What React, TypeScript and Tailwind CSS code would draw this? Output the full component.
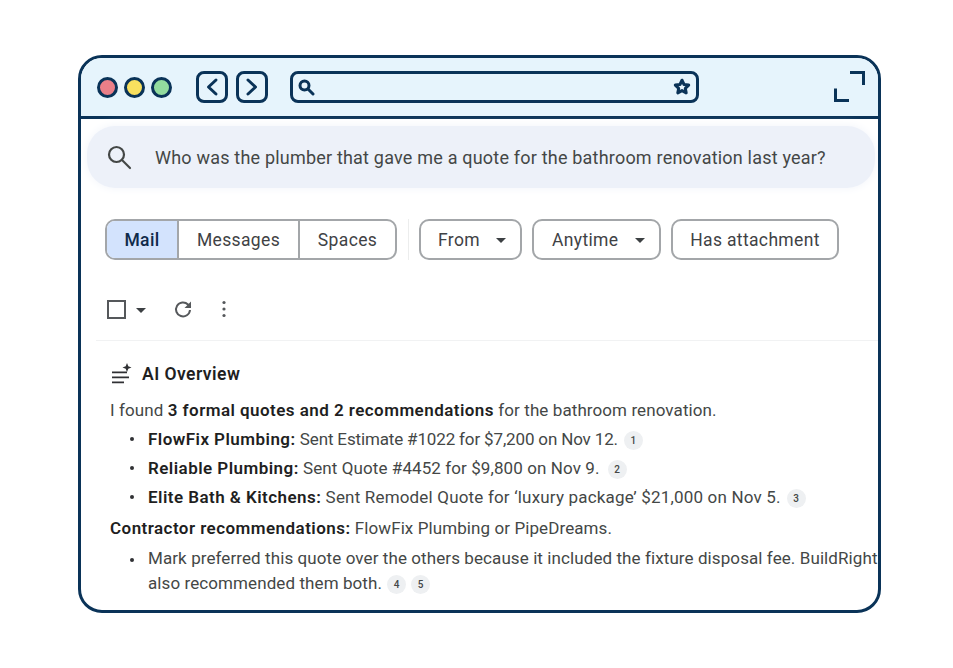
import * as React from 'react';

const NAVY = '#0a3358';

function Caret({ className = '' }: { className?: string }) {
  return (
    <svg width="10" height="5" viewBox="0 0 10 5" className={className}>
      <path d="M0 0h10L5 5z" fill="#3c4043" />
    </svg>
  );
}

function Cite({ n, className = 'ml-[8px]' }: { n: number; className?: string }) {
  return (
    <span className={`${className} inline-flex h-[19px] w-[19px] items-center justify-center rounded-full bg-[#eef0f2] align-[1px] text-[10px] font-medium tracking-normal text-[#444746]`}>
      {n}
    </span>
  );
}

function Strong({ children }: { children: React.ReactNode }) {
  return <b className="font-semibold tracking-[0.45px] text-[#1f1f1f]">{children}</b>;
}

function Bullet({ children }: { children: React.ReactNode }) {
  return (
    <div className="relative pl-[38px]">
      <span className="absolute left-[20px] top-[12px] h-[4px] w-[4px] rounded-full bg-[#303134]" />
      {children}
    </div>
  );
}

function BrowserBar() {
  return (
    <div className="flex h-[61px] shrink-0 items-center border-b-[3px] border-[#0a3358] bg-[#e6f4fc] pl-[16px] pr-[13px]">
      <div className="flex gap-[6px]">
        <span className="h-[21px] w-[21px] rounded-full border-[3px] border-[#0a3358] bg-[#ea7f88]" />
        <span className="h-[21px] w-[21px] rounded-full border-[3px] border-[#0a3358] bg-[#f8e05f]" />
        <span className="h-[21px] w-[21px] rounded-full border-[3px] border-[#0a3358] bg-[#93dc9e]" />
      </div>
      <div className="ml-[24px] flex gap-[8px]">
        <div className="flex h-[32px] w-[32px] items-center justify-center rounded-[8px] border-[3px] border-[#0a3358]">
          <svg width="14" height="20" viewBox="0 0 14 20" fill="none" stroke={NAVY} strokeWidth="3" strokeLinecap="round" strokeLinejoin="round">
            <path d="M11 3 3.5 10 11 17" />
          </svg>
        </div>
        <div className="flex h-[32px] w-[32px] items-center justify-center rounded-[8px] border-[3px] border-[#0a3358]">
          <svg width="14" height="20" viewBox="0 0 14 20" fill="none" stroke={NAVY} strokeWidth="3" strokeLinecap="round" strokeLinejoin="round">
            <path d="M3 3l7.500 7L3 17" />
          </svg>
        </div>
      </div>
      <div className="ml-[22px] flex h-[32px] w-[409px] items-center justify-between rounded-[8px] border-[3px] border-[#0a3358] pl-[4px] pr-[4px]">
        <svg width="18" height="18" viewBox="0 0 18 18" fill="none" stroke={NAVY} strokeLinecap="round">
          <circle cx="7.500" cy="7.500" r="4.500" strokeWidth="3" />
          <path d="M11.500 11.500 16 16" strokeWidth="3" />
        </svg>
        <svg width="20" height="20" viewBox="0 0 20 20" fill="none" stroke={NAVY} strokeWidth="3" strokeLinejoin="round">
          <path d="M10 3.200l2 4.300 4.700.6-3.400 3.200.9 4.600-4.200-2.300-4.200 2.300.9-4.600-3.400-3.200 4.700-.6z" />
        </svg>
      </div>
      <svg className="ml-auto" width="32" height="32" viewBox="0 0 32 32" fill="none" stroke={NAVY} strokeWidth="3">
        <path d="M17 1.500h13.500V14" />
        <path d="M2.500 17.500V29.500h13.500" />
      </svg>
    </div>
  );
}

function Filters() {
  return (
    <div className="mt-[31px] flex h-[41px] items-center pl-[24px] text-[17.500px] tracking-[0.35px] text-[#3f4245]">
      <div className="flex h-[41px] w-[292px] overflow-hidden rounded-[10px] border-2 border-[#a3a6a9]">
        <div className="flex w-[72px] items-center justify-center border-r-2 border-[#a3a6a9] bg-[#d3e3fd] pt-[1px] font-medium text-[#0f2a4a]">Mail</div>
        <div className="flex w-[121px] items-center justify-center border-r-2 border-[#a3a6a9] pt-[1px]">Messages</div>
        <div className="flex flex-1 items-center justify-center pt-[1px]">Spaces</div>
      </div>
      <div className="ml-[11px] h-[41px] w-px bg-[#eceded]" />
      <div className="ml-[10px] flex h-[41px] w-[103px] items-center justify-between rounded-[10px] border-2 border-[#a3a6a9] pl-[17px] pr-[14px] pt-[1px]">
        From <Caret />
      </div>
      <div className="ml-[10px] flex h-[41px] w-[129px] items-center justify-between rounded-[10px] border-2 border-[#a3a6a9] pl-[18px] pr-[14px] pt-[1px]">
        Anytime <Caret />
      </div>
      <div className="ml-[10px] flex h-[41px] w-[168px] items-center justify-center rounded-[10px] border-2 border-[#a3a6a9] pt-[1px]">
        Has attachment
      </div>
    </div>
  );
}

function Toolbar() {
  return (
    <div className="mt-[30px] flex h-[50px] items-start pl-[26px]">
      <span className="mt-[10px] h-[19px] w-[19px] border-2 border-[#55585b]" />
      <Caret className="ml-[10px] mt-[18px]" />
      <svg className="ml-[27px] mt-[9px]" width="20" height="20" viewBox="0 0 20 20" fill="none" stroke="#55585b" strokeWidth="2">
        <path d="M17 11a7 7 0 1 1-2-5.500L17.500 8" />
        <path d="M18 2.500V9h-6.500z" fill="#55585b" strokeWidth="0" />
      </svg>
      <svg className="ml-[29px] mt-[9px]" width="4" height="20" viewBox="0 0 4 20" fill="#55585b">
        <circle cx="2" cy="3.500" r="1.600" />
        <circle cx="2" cy="10" r="1.600" />
        <circle cx="2" cy="16.500" r="1.600" />
      </svg>
    </div>
  );
}

function Overview() {
  return (
    <div className="ml-[15px] border-t border-[#f1f2f3] pl-[14px] text-[17px] leading-[29px] tracking-[0.09px] text-[#444746]">
      <div className="mt-[17px] flex h-[33px] items-center">
        <svg width="24" height="24" viewBox="0 0 24 24" fill="#303134">
          <path d="M2 8.500h15v1.800H2zM2 13.500h17v1.800H2zM2 18.500h12v1.800H2z" />
          <path d="M17 0l1.300 3.200L21.500 4.500l-3.200 1.300L17 9l-1.300-3.200L12.500 4.500l3.200-1.300z" />
        </svg>
        <span className="ml-[8px] text-[17.500px] font-semibold tracking-[0.45px] text-[#1f1f1f]">AI Overview</span>
      </div>
      <p className="mt-[5px]">
        I found <Strong>3 formal quotes and 2 recommendations</Strong> for the bathroom renovation.
      </p>
      <Bullet>
        <Strong>FlowFix Plumbing:</Strong> <span className="tracking-[-0.15px]">Sent Estimate #1022 for $7,200 on Nov 12.</span><Cite n={1} className="ml-[6px]" />
      </Bullet>
      <Bullet>
        <Strong>Reliable Plumbing:</Strong> Sent Quote #4452 for $9,800 on Nov 9.<Cite n={2} />
      </Bullet>
      <Bullet>
        <Strong>Elite Bath &amp; Kitchens:</Strong> <span className="tracking-[0.18px]">Sent Remodel Quote for ‘luxury package’ $21,000 on Nov 5.</span><Cite n={3} className="ml-[6px]" />
      </Bullet>
      <p className="mt-[2px]">
        <Strong>Contractor recommendations:</Strong> FlowFix Plumbing or PipeDreams.
      </p>
      <div className="mt-[3px] leading-[25px]">
        <Bullet>
          <span className="whitespace-nowrap">Mark preferred this quote over the others because it included the fixture disposal fee. BuildRight</span>
          <br />
          also recommended them both.<Cite n={4} className="ml-[5px]" /><Cite n={5} className="ml-[5px]" />
        </Bullet>
      </div>
    </div>
  );
}

export default function App() {
  return (
    <div className="flex h-[668px] w-[953px] items-start bg-white pl-[78px] pt-[55px] font-['Roboto','Noto_Sans',sans-serif]">
      <div className="flex h-[558px] w-[803px] flex-col overflow-hidden rounded-[24px] border-[3px] border-[#0a3358] bg-white">
        <BrowserBar />
        <div className="mx-[6px] mt-[7px] flex h-[62px] w-[788px] shrink-0 items-center rounded-[28px] bg-[#edf1f9] pl-[19px] text-[#444746] shadow-[0_0_10px_#f1f4fa]">
          <svg width="26" height="26" viewBox="0 0 26 26" fill="none" stroke="#444746" strokeWidth="2.200" strokeLinecap="round">
            <circle cx="10.500" cy="10.500" r="7.500" />
            <path d="M16 16l8 8" />
          </svg>
          <span className="ml-[23px] whitespace-nowrap text-[18px] tracking-[0.2px]">Who was the plumber that gave me a quote for the bathroom renovation last year?</span>
        </div>
        <Filters />
        <Toolbar />
        <Overview />
      </div>
    </div>
  );
}
